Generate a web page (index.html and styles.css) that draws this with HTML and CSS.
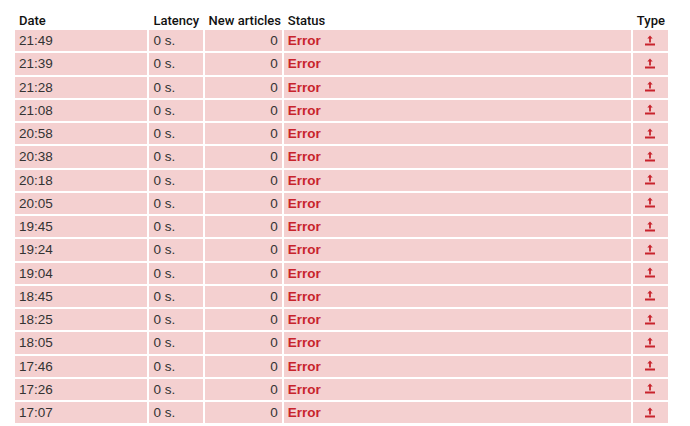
FILE: index.html
```html
<!DOCTYPE html>
<html>
<head>
<meta charset="utf-8">
<link rel="stylesheet" href="styles.css">
</head>
<body>
<table class="log">
<thead>
<tr><th class="c-date">Date</th><th class="c-lat">Latency</th><th class="c-new">New articles</th><th class="c-status">Status</th><th class="c-type">Type</th></tr>
</thead>
<tbody id="rows"></tbody>
</table>
<script src="app.js"></script>
</body>
</html>
```
FILE: styles.css
```css
html, body { margin: 0; padding: 0; background: #fff; }
body { padding: 9px 0 0 13px; font-family: "Liberation Sans", Arial, sans-serif; font-size: 13px; color: #333; }
.log { border-collapse: separate; border-spacing: 2px; width: 657px; table-layout: fixed; }
.log th { font-family: Roboto, "Liberation Sans", sans-serif; font-weight: 500; color: #111; text-align: left; padding: 3px 4px 0; height: 17px; box-sizing: border-box; line-height: 14px; font-size: 13px; vertical-align: bottom; white-space: nowrap; }
.log th.c-new { text-align: right; }
.log th.c-type { text-align: center; }
.c-date { width: 132px; }
.c-lat { width: 53px; }
.c-new { width: 77px; }
.c-status { width: 346px; }
.c-type { width: 35px; }
.log td { background: #f4d0d0; padding: 3px 4px; height: 21.25px; box-sizing: border-box; line-height: 15px; vertical-align: middle; white-space: nowrap; font-size: 13.5px; }
.log td.num { text-align: right; }
.log td.err { color: #c8232c; font-weight: bold; }
.log td.ico { text-align: center; padding: 0; }
.ico svg { display: block; margin: 0 auto; }
```
FILE: app.js
```js
var times = ["21:49","21:39","21:28","21:08","20:58","20:38","20:18","20:05","19:45","19:24","19:04","18:45","18:25","18:05","17:46","17:26","17:07"];
var tb = document.getElementById("rows");
var html = "";
times.forEach(function (t) {
  html += '<tr><td>' + t + '</td><td>0 s.</td><td class="num">0</td><td class="err">Error</td>' +
    '<td class="ico"><svg width="12" height="12" viewBox="0 0 12 12"><rect x="1" y="8.5" width="10" height="2" fill="#c8232c"/><rect x="5.1" y="3" width="1.8" height="4.5" fill="#c8232c"/><path d="M3.3 3.6L6 0.6L8.7 3.6Z" fill="#c8232c"/></svg></td></tr>';
});
tb.innerHTML = html;
```
